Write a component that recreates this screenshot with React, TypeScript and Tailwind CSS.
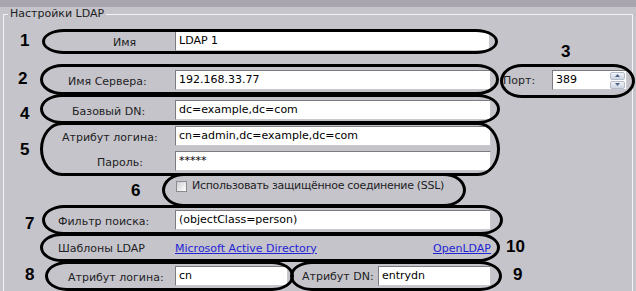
import React from "react";

const ovals = [
  { left: 42, top: 29, width: 456, height: 25 },
  { left: 40, top: 64, width: 459, height: 31 },
  { left: 500, top: 64, width: 135, height: 34 },
  { left: 40, top: 94, width: 460, height: 30 },
  { left: 40, top: 122, width: 460, height: 54 },
  { left: 162, top: 173, width: 304, height: 34 },
  { left: 42, top: 205, width: 461, height: 30 },
  { left: 40, top: 233, width: 460, height: 29 },
  { left: 45, top: 261, width: 249, height: 30 },
  { left: 290, top: 261, width: 212, height: 30 },
];

const marks = [
  { n: "1", left: 20, top: 32 },
  { n: "2", left: 18, top: 70 },
  { n: "3", left: 561, top: 43 },
  { n: "4", left: 20, top: 105 },
  { n: "5", left: 20, top: 141 },
  { n: "6", left: 131, top: 182 },
  { n: "7", left: 25, top: 215 },
  { n: "8", left: 25, top: 266 },
  { n: "9", left: 513, top: 266 },
  { n: "10", left: 506, top: 238 },
];

const Field = ({ value, className = "" }: { value: string; className?: string }) => (
  <div
    className={`h-[20px] bg-white border border-t-[#7c7c80] border-l-[#7c7c80] border-r-[#c9c8cc] border-b-[#c9c8cc] pl-[3px] flex items-center text-black ${className}`}
  >
    {value}
  </div>
);

const Label = ({ text, pl, w = 171 }: { text: string; pl: number; w?: number }) => (
  <div className="shrink-0 h-full flex items-center pt-[4px]" style={{ width: w, paddingLeft: pl }}>
    {text}
  </div>
);

export default function App() {
  return (
    <div className="relative w-[636px] h-[291px] overflow-hidden bg-[#c5c4ca] font-['DejaVu_Sans',sans-serif] text-[11px] text-[#1d1d24]">
      <div className="h-[7px] bg-[#a8a5ae]" />

      <fieldset className="ml-[3px] w-[630px] h-[300px] border border-[#f2f2f4] p-0">
        <legend className="ml-[4px] px-[2px] leading-[14px]">Настройки LDAP</legend>

        {/* Имя */}
        <div className="flex h-[20px] mt-[10px]">
          <Label text="Имя" pl={109} />
          <Field value="LDAP 1" className="w-[315px]" />
        </div>

        {/* Сервер + порт */}
        <div className="flex h-[20px] mt-[19px]">
          <Label text="Имя Сервера:" pl={64} />
          <Field value="192.168.33.77" className="w-[316px]" />
          <div className="ml-[12px] w-[49px] h-full flex items-center pt-[3px]">Порт:</div>
          <div className="w-[75px] h-[20px] bg-white border border-t-[#7c7c80] border-l-[#7c7c80] border-r-[#c9c8cc] border-b-[#c9c8cc] flex items-center justify-between pl-[3px] text-black">
            <span>389</span>
            <div className="flex flex-col gap-[1px] mr-[1px]">
              <div className="w-[15px] h-[8px] bg-gradient-to-b from-[#f2f4f8] to-[#cdd5e2] border border-[#b4bccb] rounded-[2px] flex items-center justify-center">
                <svg width="5" height="3" viewBox="0 0 5 3"><path d="M0 3 L2.5 0 L5 3 Z" fill="#4d6185" /></svg>
              </div>
              <div className="w-[15px] h-[8px] bg-gradient-to-b from-[#f2f4f8] to-[#cdd5e2] border border-[#b4bccb] rounded-[2px] flex items-center justify-center">
                <svg width="5" height="3" viewBox="0 0 5 3"><path d="M0 0 L2.5 3 L5 0 Z" fill="#4d6185" /></svg>
              </div>
            </div>
          </div>
        </div>

        {/* Базовый DN */}
        <div className="flex h-[20px] mt-[10px]">
          <Label text="Базовый DN:" pl={68} />
          <Field value="dc=example,dc=com" className="w-[316px]" />
        </div>

        {/* Атрибут логина */}
        <div className="flex h-[20px] mt-[6px]">
          <Label text="Атрибут логина:" pl={58} />
          <Field value="cn=admin,dc=example,dc=com" className="w-[316px]" />
        </div>

        {/* Пароль */}
        <div className="flex h-[20px] mt-[5px]">
          <Label text="Пароль:" pl={93} />
          <Field value="*****" className="w-[316px]" />
        </div>

        {/* SSL */}
        <div className="flex h-[14px] mt-[8px] items-center pl-[172px]">
          <div className="w-[11px] h-[11px] border border-[#8a8a90] bg-gradient-to-br from-[#cfcfd4] to-white" />
          <span className="ml-[5px] tracking-[-0.3px]">Использовать защищённое соединение (SSL)</span>
        </div>

        {/* Фильтр */}
        <div className="flex h-[20px] mt-[17px]">
          <Label text="Фильтр поиска:" pl={54} />
          <Field value="(objectClass=person)" className="w-[316px]" />
        </div>

        {/* Шаблоны */}
        <div className="flex h-[14px] mt-[12px] items-center">
          <div className="w-[171px] pl-[54px]">Шаблоны LDAP</div>
          <div className="w-[316px] flex justify-between text-[#2323d6] underline">
            <span>Microsoft Active Directory</span>
            <span>OpenLDAP</span>
          </div>
        </div>

        {/* Атрибуты */}
        <div className="flex h-[20px] mt-[10px]">
          <Label text="Атрибут логина:" pl={64} />
          <Field value="cn" className="w-[113px]" />
          <div className="ml-[14px] w-[76px] h-full flex items-center pt-[3px]">Атрибут DN:</div>
          <Field value="entrydn" className="w-[113px]" />
        </div>
      </fieldset>

      {/* annotation overlay */}
      {ovals.map((o, i) => (
        <div
          key={i}
          className="absolute border-[3px] border-black rounded-[22px_/_50%] pointer-events-none"
          style={{ left: o.left, top: o.top, width: o.width, height: o.height }}
        />
      ))}
      {marks.map((m) => (
        <div
          key={m.n}
          className="absolute font-['Liberation_Sans',Arial,sans-serif] font-bold text-[17px] leading-[17px] text-black"
          style={{ left: m.left, top: m.top }}
        >
          {m.n}
        </div>
      ))}
    </div>
  );
}
